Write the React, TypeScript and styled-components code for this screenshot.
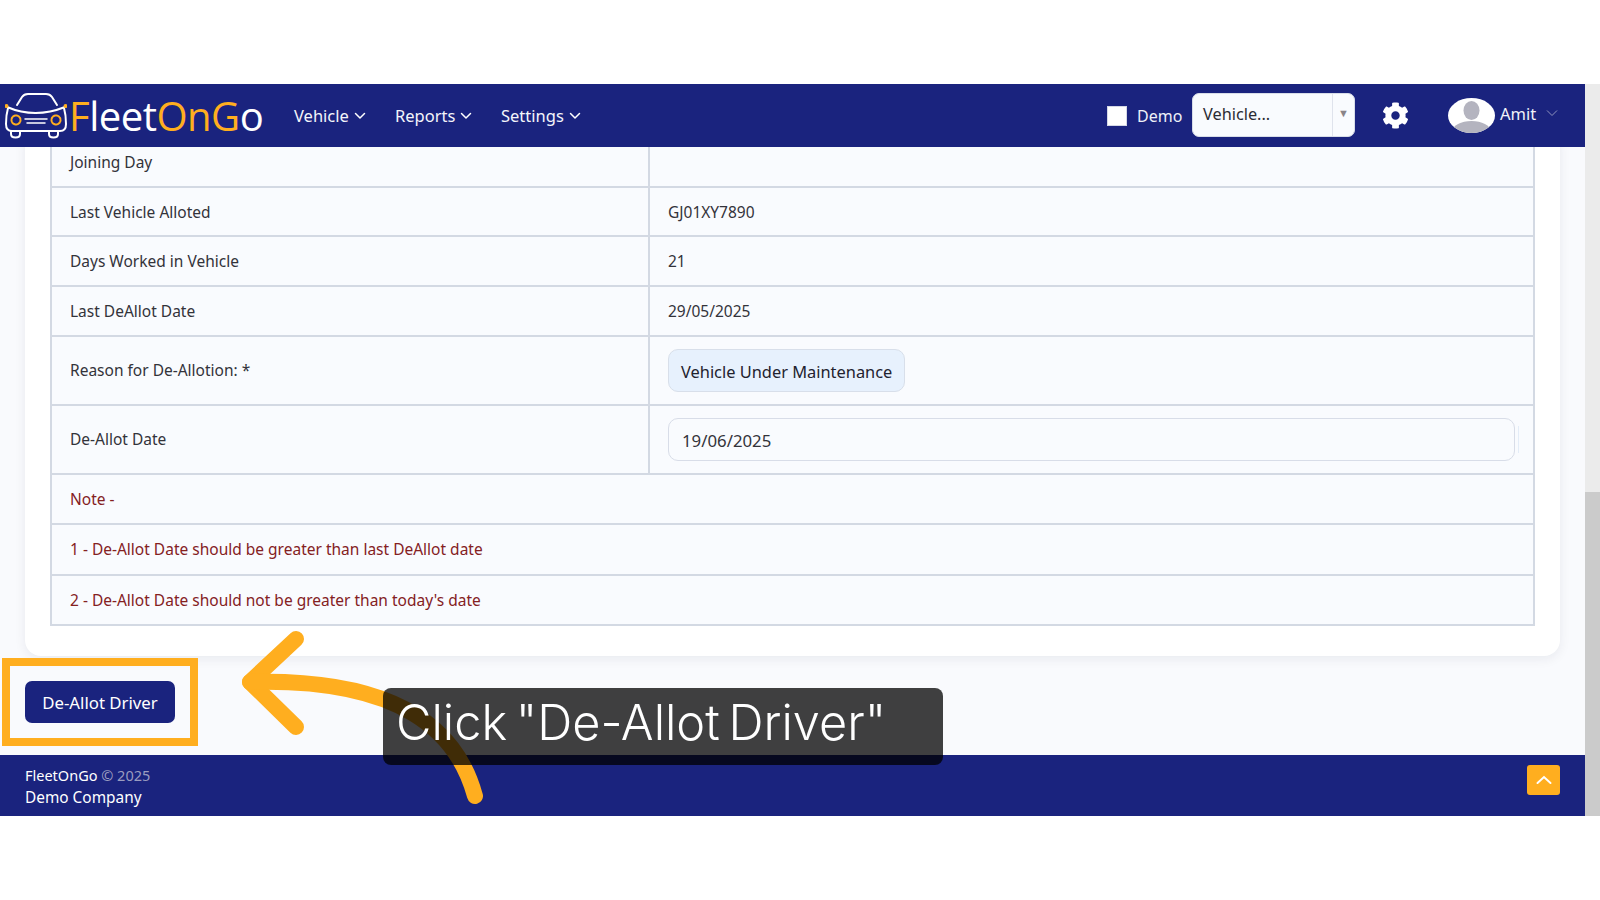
import React from "react";
import styled, { createGlobalStyle } from "styled-components";
import { FaCog } from "react-icons/fa";

const GlobalStyle = createGlobalStyle`
  html, body {
    margin: 0;
    padding: 0;
    background: #fff;
    overflow: hidden;
    font-family: "Noto Sans", "Open Sans", sans-serif;
  }
  * { box-sizing: border-box; }
`;

const Page = styled.div`
  position: relative;
  width: 1600px;
  height: 900px;
  padding: 84px 0 84px;
  background: #fff;
`;

const Frame = styled.div`
  display: flex;
  height: 732px;
`;

const Main = styled.div`
  display: flex;
  flex-direction: column;
  width: 1585px;
  background: #f9fafd;
`;

const Scrollbar = styled.div`
  display: flex;
  flex-direction: column;
  justify-content: flex-end;
  width: 15px;
  background: #ebebeb;
`;

const ScrollThumb = styled.div`
  height: 324px;
  background: #cbcbcb;
`;

const NavBar = styled.header`
  display: flex;
  align-items: center;
  flex: none;
  height: 63px;
  padding-left: 5px;
  background: #1a237e;
  color: #fff;
`;

const Logo = styled.div`
  display: flex;
  align-items: center;
  width: 289px;
`;

const LogoText = styled.span`
  margin-left: 2px;
  font-family: "Open Sans", sans-serif;
  font-size: 40px;
  letter-spacing: -0.5px;
  line-height: 1;
  color: #fff;
`;

const Accent = styled.span`
  color: #ffae1f;
`;

const NavItem = styled.div<{ $width: number }>`
  display: flex;
  align-items: center;
  gap: 5px;
  width: ${(p) => p.$width}px;
  font-size: 16.5px;
  color: #f4f5fb;
`;

const NavRight = styled.div`
  display: flex;
  align-items: center;
  margin-left: auto;
  height: 100%;
`;

const Checkbox = styled.span`
  width: 20px;
  height: 20px;
  background: #fff;
  border: 1px solid #d5d8e6;
`;

const DemoLabel = styled.span`
  margin-left: 10px;
  width: 55px;
  font-size: 16px;
  color: #eef0f8;
`;

const VehicleSelect = styled.div`
  display: flex;
  align-items: stretch;
  width: 163px;
  height: 44px;
  margin-top: -1px;
  background: #f9fbfe;
  border: 1px solid #d8dde8;
  border-radius: 7px;
  color: #2b2b33;
  font-size: 16.3px;
`;

const SelectText = styled.span`
  display: flex;
  align-items: center;
  flex: 1;
  padding: 0 0 3px 10px;
`;

const SelectCaret = styled.span`
  display: flex;
  align-items: center;
  justify-content: center;
  width: 22px;
  padding-bottom: 6px;
  border-left: 1px solid #dfe3ec;
  color: #8a8488;
  font-size: 11px;
`;

const GearWrap = styled.span`
  display: flex;
  margin: 0 0 0 27px;
  color: #fff;
  font-size: 27px;
`;

const Avatar = styled.svg`
  margin-left: 39px;
  margin-top: -1px;
`;

const UserName = styled.span`
  margin-left: 5px;
  margin-top: -5px;
  width: 46px;
  font-size: 16.5px;
  color: #f1f2f9;
`;

const UserCaret = styled.svg`
  margin: -6px 27px 0 0;
`;

const Content = styled.main`
  flex: 1;
  min-height: 0;
  padding: 0 25px;
  overflow: hidden;
`;

const Card = styled.section`
  margin-top: -11px;
  padding: 0 25px 30px;
  background: #fff;
  border-radius: 0 0 16px 16px;
  box-shadow: 0 3px 12px rgba(20, 30, 60, 0.07);
`;

const Table = styled.table`
  width: 100%;
  table-layout: fixed;
  border-collapse: collapse;
  background: #f9fbfe;
  border: 2px solid #d3d9e3;
  font-size: 15.5px;
  color: #33333a;
`;

const Cell = styled.td<{ $height?: number; $note?: boolean }>`
  height: ${(p) => p.$height ?? 49.7}px;
  padding: 0 18px;
  border: 2px solid #d3d9e3;
  color: ${(p) => (p.$note ? "#84211f" : "inherit")};
`;

const LabelCol = styled.col`
  width: 598px;
`;

const Pill = styled.div`
  display: inline-flex;
  align-items: center;
  height: 43px;
  padding: 2px 12px 0;
  background: #e7f1fd;
  border: 1px solid #d8dfea;
  border-radius: 10px;
  font-size: 16.4px;
  color: #22222e;
`;

const DateField = styled.div`
  position: relative;
  display: flex;
  align-items: center;
  height: 43px;
  padding: 2px 13px 0;
  background: #f9fbfe;
  border: 1px solid #d8dde8;
  border-radius: 10px;
  font-size: 16.8px;
  color: #33333a;

  &::after {
    content: "";
    position: absolute;
    right: -5px;
    top: 7px;
    bottom: 7px;
    width: 1px;
    background: #e4edf8;
  }
`;

const Actions = styled.div`
  padding-top: 25px;
`;

const PrimaryButton = styled.button`
  display: block;
  width: 150px;
  height: 42px;
  padding: 2px 0 0;
  border: 0;
  border-radius: 7px;
  background: #1a237e;
  color: #fff;
  font-family: inherit;
  font-size: 16.8px;
`;

const Footer = styled.footer`
  display: flex;
  align-items: flex-start;
  justify-content: space-between;
  flex: none;
  height: 61px;
  padding: 10px 25px 0;
  background: #1a237e;
  color: #fff;
`;

const Brand = styled.div`
  font-size: 14.5px;
  line-height: 21px;
`;

const CompanyName = styled.div`
  font-size: 15.4px;
  line-height: 23px;
`;

const Muted = styled.span`
  color: #9a9cc0;
`;

const TopButton = styled.span`
  display: flex;
  align-items: center;
  justify-content: center;
  width: 33px;
  height: 30px;
  background: #ffae1f;
  border-radius: 3px;
`;

const Highlight = styled.div`
  position: absolute;
  left: 2px;
  top: 658px;
  width: 196px;
  height: 88px;
  border: 8px solid #ffae1f;
`;

const ArrowOverlay = styled.svg`
  position: absolute;
  left: 0;
  top: 0;
  pointer-events: none;
`;

const Caption = styled.div`
  position: absolute;
  left: 383px;
  top: 688px;
  width: 560px;
  height: 77px;
  padding-left: 13px;
  background: rgba(0, 0, 0, 0.75);
  border-radius: 8px;
  color: #fff;
  font-family: "Inter", sans-serif;
  font-size: 48.7px;
  font-weight: 300;
  line-height: 70px;
  word-spacing: -5px;
  white-space: nowrap;
`;

const Chevron = () => (
  <svg width="12" height="8" viewBox="0 0 12 8" fill="none">
    <path d="M1.5 1.5L6 6L10.5 1.5" stroke="#fff" strokeWidth="1.5" strokeLinecap="round" strokeLinejoin="round" />
  </svg>
);

const CarLogo = () => (
  <svg width="62" height="46" viewBox="0 0 62 46" fill="none" stroke="#fff" strokeWidth="2" strokeLinecap="round">
    <path d="M12 12L17 4Q19 1 23 1H41Q45 1 47 4L52 12" />
    <path d="M2 14Q30 26 60 14" />
    <path d="M3 15Q1 22 1 31Q1 38 7 38H55Q61 38 61 31Q61 22 59 15" />
    <path d="M6 38V41Q6 44.5 10.5 44.5Q15 44.5 15 41V38" />
    <path d="M44 38V41Q44 44.5 48.5 44.5Q53 44.5 53 41V38" />
    <path d="M20 26H42M22 30H40" strokeWidth="1.5" />
    <circle cx="11" cy="27" r="4.5" stroke="#ffae1f" strokeWidth="2" strokeDasharray="1.5 1" />
    <circle cx="51" cy="27" r="4.5" stroke="#ffae1f" strokeWidth="2" strokeDasharray="1.5 1" />
    <circle cx="1.5" cy="13" r="1" stroke="#ffae1f" />
    <circle cx="60.5" cy="13" r="1" stroke="#ffae1f" />
  </svg>
);

const rows = [
  { label: "Joining Day", value: "" },
  { label: "Last Vehicle Alloted", value: "GJ01XY7890" },
  { label: "Days Worked in Vehicle", value: "21" },
  { label: "Last DeAllot Date", value: "29/05/2025" },
];

const notes = [
  "Note -",
  "1 - De-Allot Date should be greater than last DeAllot date",
  "2 - De-Allot Date should not be greater than today's date",
];

export default function App() {
  return (
    <Page>
      <GlobalStyle />
      <Frame>
        <Main>
          <NavBar>
            <Logo>
              <CarLogo />
              <LogoText>
                <Accent>F</Accent>leet<Accent>OnG</Accent>o
              </LogoText>
            </Logo>
            <NavItem $width={101}>Vehicle <Chevron /></NavItem>
            <NavItem $width={106}>Reports <Chevron /></NavItem>
            <NavItem $width={100}>Settings <Chevron /></NavItem>
            <NavRight>
              <Checkbox />
              <DemoLabel>Demo</DemoLabel>
              <VehicleSelect>
                <SelectText>Vehicle...</SelectText>
                <SelectCaret>▼</SelectCaret>
              </VehicleSelect>
              <GearWrap><FaCog /></GearWrap>
              <Avatar width="47" height="35" viewBox="0 0 47 35">
                <ellipse cx="23.5" cy="17.5" rx="23.5" ry="17.5" fill="#fff" />
                <clipPath id="face"><ellipse cx="23.5" cy="17.5" rx="23.5" ry="17.5" /></clipPath>
                <g clipPath="url(#face)" fill="#b4b4bf">
                  <ellipse cx="23.5" cy="12.5" rx="8" ry="9.5" />
                  <ellipse cx="23.5" cy="33" rx="19" ry="10" />
                </g>
              </Avatar>
              <UserName>Amit</UserName>
              <UserCaret width="12" height="8" viewBox="0 0 12 8" fill="none">
                <path d="M1 1.5L6 6.5L11 1.5" stroke="#8f93bd" strokeWidth="1" />
              </UserCaret>
            </NavRight>
          </NavBar>
          <Content>
            <Card>
              <Table>
                <colgroup>
                  <LabelCol />
                  <col />
                </colgroup>
                <tbody>
                  {rows.map((row) => (
                    <tr key={row.label}>
                      <Cell>{row.label}</Cell>
                      <Cell>{row.value}</Cell>
                    </tr>
                  ))}
                  <tr>
                    <Cell $height={69}>Reason for De-Allotion: *</Cell>
                    <Cell $height={69}><Pill>Vehicle Under Maintenance</Pill></Cell>
                  </tr>
                  <tr>
                    <Cell $height={69}>De-Allot Date</Cell>
                    <Cell $height={69}><DateField>19/06/2025</DateField></Cell>
                  </tr>
                  {notes.map((note) => (
                    <tr key={note}>
                      <Cell colSpan={2} $note $height={50.4}>{note}</Cell>
                    </tr>
                  ))}
                </tbody>
              </Table>
            </Card>
            <Actions>
              <PrimaryButton>De-Allot Driver</PrimaryButton>
            </Actions>
          </Content>
          <Footer>
            <div>
              <Brand>FleetOnGo <Muted>© 2025</Muted></Brand>
              <CompanyName>Demo Company</CompanyName>
            </div>
            <TopButton>
              <svg width="16" height="10" viewBox="0 0 16 10" fill="none">
                <path d="M1.5 8L8 2L14.5 8" stroke="#fff" strokeWidth="2" strokeLinecap="round" />
              </svg>
            </TopButton>
          </Footer>
        </Main>
        <Scrollbar>
          <ScrollThumb />
        </Scrollbar>
      </Frame>
      <Highlight />
      <ArrowOverlay width="1600" height="900" viewBox="0 0 1600 900" fill="none" stroke="#ffae1f" strokeWidth="16" strokeLinecap="round" strokeLinejoin="round">
        <path d="M296 639L250 682L296 727" />
        <path d="M475 796C457 730 400 678 250 682" />
      </ArrowOverlay>
      <Caption>Click "De-Allot Driver"</Caption>
    </Page>
  );
}
